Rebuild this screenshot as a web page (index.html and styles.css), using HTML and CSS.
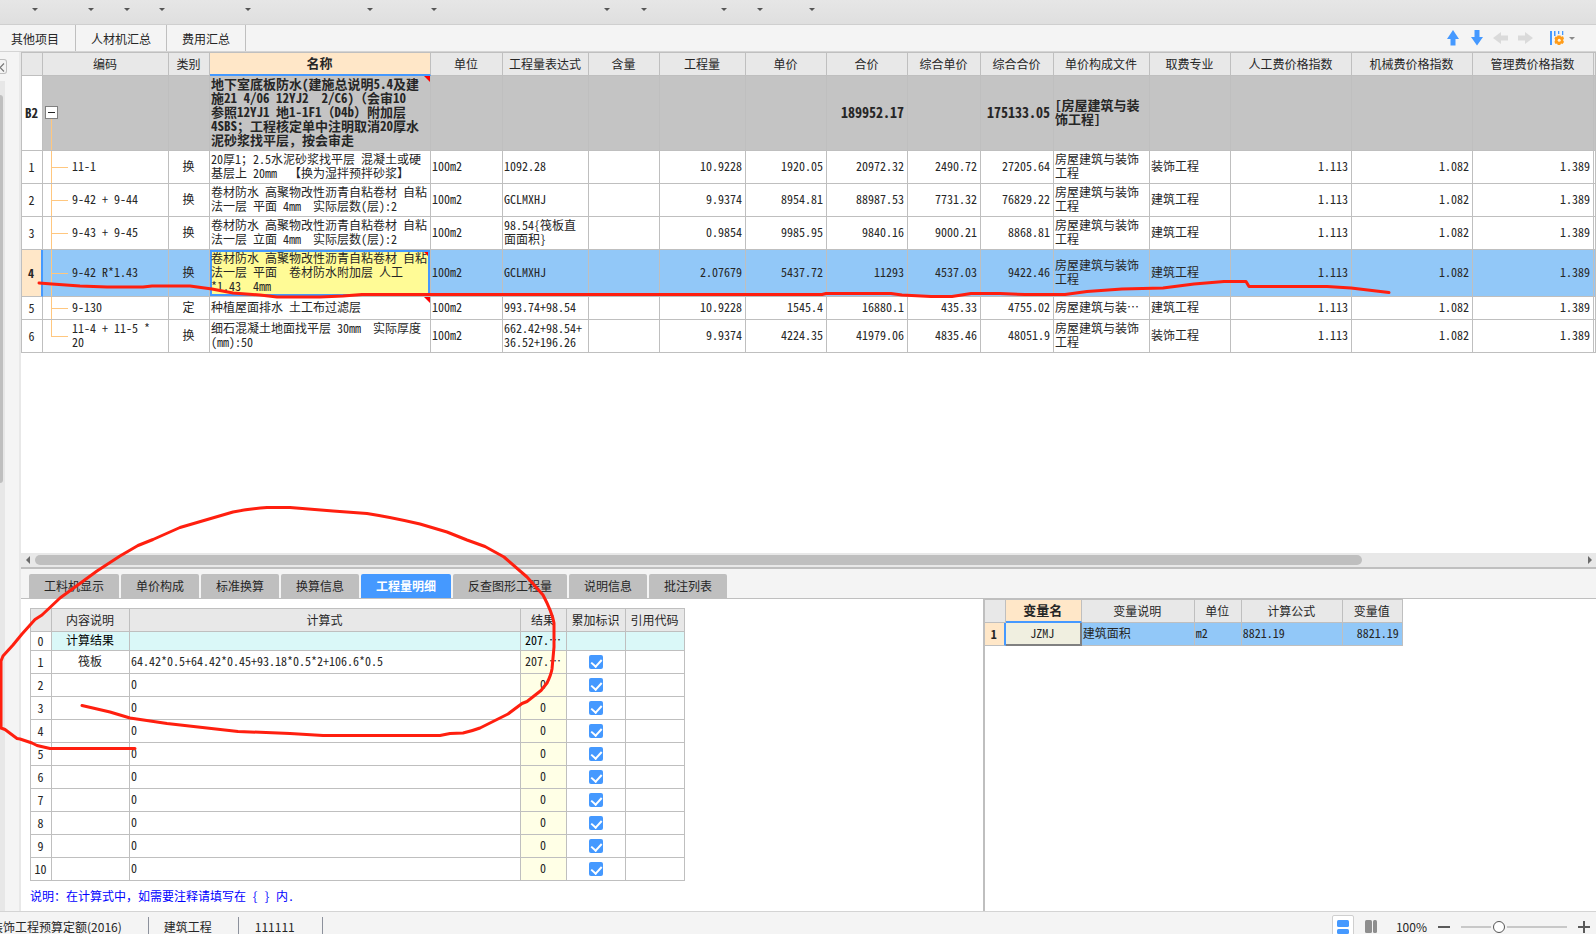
FILE: index.html
```html
<!DOCTYPE html>
<html lang="zh-CN">
<head>
<meta charset="utf-8">
<title>工程预算</title>
<link rel="stylesheet" href="styles.css">
</head>
<body>
<div class="app">
  <div class="toolbar">
    <button class="drop" aria-label="菜单 1"></button>
    <button class="drop" aria-label="菜单 2"></button>
    <button class="drop" aria-label="菜单 3"></button>
    <button class="drop" aria-label="菜单 4"></button>
    <button class="drop" aria-label="菜单 5"></button>
    <button class="drop" aria-label="菜单 6"></button>
    <button class="drop" aria-label="菜单 7"></button>
    <button class="drop" aria-label="菜单 8"></button>
    <button class="drop" aria-label="菜单 9"></button>
    <button class="drop" aria-label="菜单 10"></button>
    <button class="drop" aria-label="菜单 11"></button>
    <button class="drop" aria-label="菜单 12"></button>
  </div>

  <div class="pages">
    <button class="page first">其他项目</button>
    <button class="page">人材机汇总</button>
    <button class="page">费用汇总</button>
    <div class="tools">
      <button class="tool" aria-label="上移"><svg width="12" height="16" viewBox="0 0 12 16"><path d="M6 0 12 9H8.500V15.500H3.500V9H0z" fill="#4599ff"/></svg></button>
      <button class="tool" aria-label="下移"><svg width="12" height="16" viewBox="0 0 12 16"><path d="M6 15.500 12 7H8.500V0H3.500V7H0z" fill="#4599ff"/></svg></button>
      <button class="tool" aria-label="左移"><svg width="15" height="12" viewBox="0 0 15 12"><path d="M0 6 8 0V3.500H15V8.500H8V12z" fill="#dadada"/></svg></button>
      <button class="tool" aria-label="右移"><svg width="15" height="12" viewBox="0 0 15 12"><path d="M15 6 7 0V3.500H0V8.500H7V12z" fill="#dadada"/></svg></button>
      <button class="tool config" aria-label="列设置">
        <svg width="15" height="16" viewBox="0 0 15 16"><path d="M0 1H2V15H0zM4 1H5.500V6H4zM8 1H9.300V4H8zM12 1H13.300V5H12z" fill="#4599ff"/><path d="M7.500 5.500H10.500L11 6.700 13 6.300 14 8.500 13 10 14 12 12.500 14 11 13.500 10.200 15H7.800L7 13.500 5.500 14 4.500 12 5.200 10 4.500 8.500 5.500 6.500 7 6.800z" fill="#ff9c1a"/><circle cx="9.200" cy="10.200" r="1.500" fill="#fff4e0"/></svg>
        <span class="caret"></span>
      </button>
    </div>
  </div>

  <div class="body">
    <aside class="gutter">
      <button class="fold" aria-label="收起"><svg width="7" height="15" viewBox="0 0 7 15"><path d="M4 3.500 0 7.500 4 11.500" fill="none" stroke="#777" stroke-width="1.200"/></svg></button>
      <div class="vbar"><span class="vthumb"></span></div>
    </aside>

    <main class="work">
      <section class="grid-area">
        <table class="grid main-grid">
          <colgroup><col class="w21"><col class="w126"><col class="w41"><col class="w221"><col class="w72"><col class="w86"><col class="w71"><col class="w86"><col class="w81"><col class="w81"><col class="w73"><col class="w73"><col class="w96"><col class="w81"><col class="w121"><col class="w121"><col class="w121"><col></colgroup>
          <thead>
            <tr class="h23"><th></th><th>编码</th><th>类别</th><th class="current">名称</th><th>单位</th><th>工程量表达式</th><th>含量</th><th>工程量</th><th>单价</th><th>合价</th><th>综合单价</th><th>综合合价</th><th>单价构成文件</th><th>取费专业</th><th>人工费价格指数</th><th>机械费价格指数</th><th>管理费价格指数</th><th></th></tr>
          </thead>
          <tbody>
            <tr class="h75 group"><td class="idx">B2</td><td class="root"><button class="collapse" aria-label="折叠"></button></td><td></td><td class="note">地下室底板防水(建施总说明5.4及建
施21 4/06 12YJ2  2/C6)<span class="full">（</span>会审10
参照12YJ1 地1-1F1<span class="full">（</span>D4b<span class="full">）</span>附加层
4SBS；工程核定单中注明取消20厚水
泥砂浆找平层<span class="full">，</span>按会审走</td><td></td><td></td><td></td><td></td><td></td><td class="num">189952.17</td><td></td><td class="num">175133.05</td><td>[房屋建筑与装
饰工程]</td><td></td><td></td><td></td><td></td><td></td></tr>
            <tr class="h33"><td class="idx">1</td><td class="code">11-1</td><td class="mid">换</td><td>20厚1；2.5水泥砂浆找平层 混凝土或硬
基层上 20mm  【换为湿拌预拌砂浆】</td><td>100m2</td><td>1092.28</td><td></td><td class="num">10.9228</td><td class="num">1920.05</td><td class="num">20972.32</td><td class="num">2490.72</td><td class="num">27205.64</td><td>房屋建筑与装饰
工程</td><td>装饰工程</td><td class="num">1.113</td><td class="num">1.082</td><td class="num">1.389</td><td></td></tr>
            <tr class="h33"><td class="idx">2</td><td class="code">9-42 + 9-44</td><td class="mid">换</td><td>卷材防水 高聚物改性沥青自粘卷材 自粘
法一层 平面 4mm  实际层数(层):2</td><td>100m2</td><td>GCLMXHJ</td><td></td><td class="num">9.9374</td><td class="num">8954.81</td><td class="num">88987.53</td><td class="num">7731.32</td><td class="num">76829.22</td><td>房屋建筑与装饰
工程</td><td>建筑工程</td><td class="num">1.113</td><td class="num">1.082</td><td class="num">1.389</td><td></td></tr>
            <tr class="h33"><td class="idx">3</td><td class="code">9-43 + 9-45</td><td class="mid">换</td><td>卷材防水 高聚物改性沥青自粘卷材 自粘
法一层 立面 4mm  实际层数(层):2</td><td>100m2</td><td>98.54{筏板直
面面积}</td><td></td><td class="num">0.9854</td><td class="num">9985.95</td><td class="num">9840.16</td><td class="num">9000.21</td><td class="num">8868.81</td><td>房屋建筑与装饰
工程</td><td>建筑工程</td><td class="num">1.113</td><td class="num">1.082</td><td class="num">1.389</td><td></td></tr>
            <tr class="h47 selected"><td class="idx">4</td><td class="code">9-42 R*1.43</td><td class="mid">换</td><td class="note editing">卷材防水 高聚物改性沥青自粘卷材 自粘
法一层 平面  卷材防水附加层 人工
*1.43  4mm</td><td>100m2</td><td>GCLMXHJ</td><td></td><td class="num">2.07679</td><td class="num">5437.72</td><td class="num">11293</td><td class="num">4537.03</td><td class="num">9422.46</td><td>房屋建筑与装饰
工程</td><td>建筑工程</td><td class="num">1.113</td><td class="num">1.082</td><td class="num">1.389</td><td></td></tr>
            <tr class="h23"><td class="idx">5</td><td class="code">9-130</td><td class="mid">定</td><td class="note">种植屋面排水 土工布过滤层</td><td>100m2</td><td>993.74+98.54</td><td></td><td class="num">10.9228</td><td class="num">1545.4</td><td class="num">16880.1</td><td class="num">435.33</td><td class="num">4755.02</td><td>房屋建筑与装…</td><td>建筑工程</td><td class="num">1.113</td><td class="num">1.082</td><td class="num">1.389</td><td></td></tr>
            <tr class="h33"><td class="idx">6</td><td class="code last">11-4 + 11-5 *
20</td><td class="mid">换</td><td>细石混凝土地面找平层 30mm  实际厚度
(mm):50</td><td>100m2</td><td>662.42+98.54+
36.52+196.26</td><td></td><td class="num">9.9374</td><td class="num">4224.35</td><td class="num">41979.06</td><td class="num">4835.46</td><td class="num">48051.9</td><td>房屋建筑与装饰
工程</td><td>装饰工程</td><td class="num">1.113</td><td class="num">1.082</td><td class="num">1.389</td><td></td></tr>
          </tbody>
        </table>
      </section>

      <div class="hbar"><button class="arrow left" aria-label="向左滚动"></button><div class="htrack"><span class="hthumb" style="width: 85.7%"></span></div><button class="arrow right" aria-label="向右滚动"></button></div>

      <nav class="tabs">
        <button class="tab">工料机显示</button><button class="tab">单价构成</button><button class="tab">标准换算</button><button class="tab">换算信息</button><button class="tab active">工程量明细</button><button class="tab">反查图形工程量</button><button class="tab">说明信息</button><button class="tab">批注列表</button>
      </nav>

      <section class="panes">
        <div class="pane detail">
          <table class="grid detail-grid">
            <colgroup><col class="w21"><col class="w78"><col class="w391"><col class="w46"><col class="w59"><col class="w59"></colgroup>
            <thead><tr class="h23"><th></th><th>内容说明</th><th>计算式</th><th>结果</th><th>累加标识</th><th>引用代码</th></tr></thead>
            <tbody>
              <tr class="h19 total"><td class="idx">0</td><td class="mid">计算结果</td><td></td><td class="mid">207.…</td><td></td><td></td></tr>
              <tr class="h23"><td class="idx">1</td><td class="mid">筏板</td><td>64.42*0.5+64.42*0.45+93.18*0.5*2+106.6*0.5</td><td class="res">207.…</td><td class="mid"><input type="checkbox" aria-label="累加 1" checked></td><td></td></tr>
              <tr class="h23"><td class="idx">2</td><td></td><td>0</td><td class="res">0</td><td class="mid"><input type="checkbox" aria-label="累加 2" checked></td><td></td></tr>
              <tr class="h23"><td class="idx">3</td><td></td><td>0</td><td class="res">0</td><td class="mid"><input type="checkbox" aria-label="累加 3" checked></td><td></td></tr>
              <tr class="h23"><td class="idx">4</td><td></td><td>0</td><td class="res">0</td><td class="mid"><input type="checkbox" aria-label="累加 4" checked></td><td></td></tr>
              <tr class="h23"><td class="idx">5</td><td></td><td>0</td><td class="res">0</td><td class="mid"><input type="checkbox" aria-label="累加 5" checked></td><td></td></tr>
              <tr class="h23"><td class="idx">6</td><td></td><td>0</td><td class="res">0</td><td class="mid"><input type="checkbox" aria-label="累加 6" checked></td><td></td></tr>
              <tr class="h23"><td class="idx">7</td><td></td><td>0</td><td class="res">0</td><td class="mid"><input type="checkbox" aria-label="累加 7" checked></td><td></td></tr>
              <tr class="h23"><td class="idx">8</td><td></td><td>0</td><td class="res">0</td><td class="mid"><input type="checkbox" aria-label="累加 8" checked></td><td></td></tr>
              <tr class="h23"><td class="idx">9</td><td></td><td>0</td><td class="res">0</td><td class="mid"><input type="checkbox" aria-label="累加 9" checked></td><td></td></tr>
              <tr class="h23"><td class="idx">10</td><td></td><td>0</td><td class="res">0</td><td class="mid"><input type="checkbox" aria-label="累加 10" checked></td><td></td></tr>
            </tbody>
          </table>
          <p class="hint">说明：在计算式中<span class="full">，</span>如需要注释请填写在 { } 内.</p>
        </div>
        <div class="pane vars">
          <table class="grid vars-grid">
            <colgroup><col class="w21"><col class="w76"><col class="w113"><col class="w47"><col class="w101"><col class="w60"></colgroup>
            <thead><tr class="h23"><th></th><th class="current">变量名</th><th>变量说明</th><th>单位</th><th>计算公式</th><th>变量值</th></tr></thead>
            <tbody><tr class="h23 selected"><td class="idx">1</td><td class="mid key">JZMJ</td><td>建筑面积</td><td>m2</td><td>8821.19</td><td class="num">8821.19</td></tr></tbody>
          </table>
        </div>
      </section>
    </main>
  </div>

  <footer class="status">
    <div class="status-row">
      <span class="seg clip">装饰工程预算定额(2016)</span>
      <span class="seg">建筑工程</span>
      <span class="seg code-seg">111111</span>
      <div class="zoom">
        <button class="view on" aria-label="上下布局"><svg width="12" height="14" viewBox="0 0 12 14"><rect width="12" height="7" rx="1.500" fill="#4599ff"/><rect y="9" width="12" height="5" rx="1.500" fill="#4599ff"/></svg></button>
        <button class="view" aria-label="左右布局"><svg width="12" height="14" viewBox="0 0 12 14"><rect width="7" height="13" rx="1.500" fill="#8e8e8e"/><rect x="8" width="4" height="13" rx="1.500" fill="#8e8e8e"/></svg></button>
        <label class="percent" for="scale">100%</label>
        <button class="step" aria-label="缩小"><svg width="12" height="12" viewBox="0 0 12 12"><path d="M0 6H12" stroke="#5a5a5a" stroke-width="2"/></svg></button>
        <input id="scale" class="scale" type="range" min="0" max="100" value="34">
        <button class="step" aria-label="放大"><svg width="12" height="12" viewBox="0 0 12 12"><path d="M0 6H12M6 0V12" stroke="#5a5a5a" stroke-width="2"/></svg></button>
      </div>
    </div>
  </footer>

  <svg class="ink" width="1400" height="760" viewBox="0 0 1400 760" aria-hidden="true">
    <path d="M39 283 52 284 80 286 107 287H143L152 286H190L212 289 233 293 260 295 277 297H320L343 296 362 294.500H822L826 293.500H891L902 295 931 296.500H952L971 293.500H1000L1025 294.500H1065L1087 291.500 1122 289 1163 288 1194 284 1224 281.500H1246L1249 286.500H1327L1351 288 1372 290.500 1389 292.500"/>
    <path d="M82 705.500 110 712 130 718 167 723.500 238 731.500 290 733.500 323 735.500H440L450 733.500 463 733Q472 731 480 728L508 714 522 703.500 527 701.500 541 690.500 547 683Q551 675 552 669L554 647V623Q552 612 543 595L527 577 504 557 485 546.500 467 540 447 532 420 524Q390 517 367 513.500L333 511 290 507.500H267Q248 509 233 512L180 527.500 153 539.500 138 545.500 120 556 97 571 60 598 42 615 35 619.500 22 634 13 645 3 656 1 661V728L5 729.500 17 738.500 20 739 32 743 37 745.500 50 748.500H135"/>
  </svg>
</div>
</body>
</html>
```

FILE: styles.css
```css
* { box-sizing: border-box; }

body {
  margin: 0;
  color: #262626;
  background: #f4f4f4;
  font: 12px/14px "Noto Sans CJK SC", "Liberation Sans", sans-serif;
  text-spacing-trim: space-all;
}

button {
  margin: 0;
  padding: 0;
  border: 0;
  background: none;
  color: inherit;
  font: inherit;
}

svg { display: block; }

.app {
  position: relative;
  display: flex;
  flex-direction: column;
  height: 100vh;
  min-height: 780px;
  overflow: hidden;
}

/* Toolbar */
.toolbar {
  display: grid;
  grid-template-columns: 38px 56px 36px 35px 86px 122px 64px 173px 37px 80px 36px 52px;
  height: 25px;
  flex: none;
  border-bottom: 1px solid #cfcfcf;
  background: linear-gradient(#e6e6e6, #dfdfdf);
}

.drop::after {
  content: "";
  display: block;
  margin: -4px 0 0 auto;
  width: 0;
  border: 3px solid transparent;
  border-top-color: #555;
  border-bottom: 0;
}

/* Page tabs */
.pages {
  display: flex;
  height: 27px;
  flex: none;
  border-bottom: 1px solid #d4d4d4;
}

.page {
  padding: 2px 15px 0;
  border-right: 1px solid #bfbfbf;
}

.page.first { padding: 2px 16px 0 11px; }

.tools {
  display: flex;
  align-items: center;
  gap: 10px;
  margin-left: auto;
  padding-right: 21px;
}

.tool:nth-child(1) { margin-right: 2px; }

.config {
  display: flex;
  align-items: center;
  gap: 4px;
  margin-left: 7px;
}

.caret {
  border: 3px solid transparent;
  border-top-color: #8a8a8a;
  border-bottom: 0;
}

/* Body */
.body {
  display: flex;
  flex: 1;
  min-height: 0;
}

.gutter {
  display: flex;
  flex-direction: column;
  align-items: flex-start;
  width: 21px;
  flex: none;
  border-right: 2px solid #e8e8e8;
}

.fold {
  width: 7px;
  height: 15px;
  margin: 7px 0;
  border: 1px solid #bfbfbf;
  border-left: 0;
  border-radius: 0 3px 3px 0;
}

.vbar {
  width: 5px;
  flex: 1;
  padding-top: 14px;
  background: #e7e7e7;
}

.vthumb {
  display: block;
  width: 3px;
  height: 388px;
  border-radius: 0 3px 3px 0;
  background: #bfbfbf;
}

.work {
  display: flex;
  flex: 1;
  flex-direction: column;
  min-width: 0;
}

.grid-area {
  flex: 1;
  min-height: 0;
  overflow: hidden;
  background: #fff;
}

/* Tables: Latin text and digits take half the width of a Han character */
.grid {
  table-layout: fixed;
  border-collapse: separate;
  border-spacing: 0;
  border-top: 1px solid #bfbfbf;
  border-left: 1px solid #bfbfbf;
  font-feature-settings: "hwid" 1;
}

.full { font-feature-settings: normal; }

.main-grid { width: 100%; min-width: 1575px; }
.detail-grid { width: 655px; }
.vars-grid { width: 418px; border-left: 0; }

.grid th,
.grid td {
  padding: 0 3px 2px 1px;
  border-right: 1px solid #bfbfbf;
  border-bottom: 1px solid #bfbfbf;
  background: #fff;
  text-align: left;
  vertical-align: middle;
  white-space: pre;
  overflow: hidden;
}

.grid th {
  padding: 0 1px 0 0;
  background: #e8e8e8;
  font-weight: 400;
  text-align: center;
}

.grid th.current {
  padding-bottom: 1px;
  border-bottom: 2px solid #4599ff;
  background: #ffe7c8;
  font-size: 13px;
  font-weight: 700;
}

.grid .num { text-align: right; }
.grid .mid, .grid .res { padding: 0 1px 2px 0; text-align: center; }
.grid .idx { padding: 0 1px 0 0; text-align: center; }
.grid .res { background: #ffffe6; }
.grid .total td:not(.idx) { background: #daf8f8; color: #000; }

.group td {
  background: #c4c4c4;
  font-size: 13px;
  font-weight: 700;
}

.grid .group td { background: #c4c4c4; }
.group .num { font-size: 14px; }
.grid .group .idx { background: #fff; }
.grid .selected td { background: #92c8f8; }

.grid .selected .idx {
  border-right: 2px solid #4599ff;
  background: #ffe7c8;
  font-weight: 700;
}

.grid .selected .editing {
  background: #fffb96;
  box-shadow: inset 0 0 0 2px #4599ff;
}

.grid .selected .key {
  border-right: 2px solid #808080;
  border-bottom: 2px solid #808080;
  background: #f0efe0;
}

/* Comment marker in the corner of a cell */
.note { position: relative; }

.note::after {
  content: "";
  position: absolute;
  top: 0;
  right: 0;
  border-top: 6px solid #f00;
  border-left: 6px solid transparent;
}

.editing::after {
  top: 2px;
  right: 2px;
  border-top-width: 4px;
  border-left-width: 4px;
}

/* Tree lines */
.root { position: relative; }

.grid .root { padding-left: 2px; }

.collapse {
  display: block;
  width: 13px;
  height: 13px;
  border: 1px solid #808080;
  background: linear-gradient(#262626, #262626) center / 7px 1px no-repeat #fff;
}

.root::after {
  content: "";
  position: absolute;
  top: 43px;
  bottom: 0;
  left: 8px;
  border-left: 1px solid #ffc77f;
}

.grid .code {
  position: relative;
  padding-left: 29px;
}

.code::before {
  content: "";
  position: absolute;
  top: 0;
  bottom: -1px;
  left: 8px;
  border-left: 1px solid #ffc77f;
}

.code.last::before { bottom: 50%; }

.code::after {
  content: "";
  position: absolute;
  top: 50%;
  left: 8px;
  width: 17px;
  border-top: 1px solid #ffc77f;
}

.h19 { height: 19px; }
.h23 { height: 23px; }
.h33 { height: 33px; }
.h47 { height: 47px; }
.h75 { height: 75px; }

.w21 { width: 21px; }
.w41 { width: 41px; }
.w46 { width: 46px; }
.w47 { width: 47px; }
.w59 { width: 59px; }
.w60 { width: 60px; }
.w71 { width: 71px; }
.w72 { width: 72px; }
.w73 { width: 73px; }
.w76 { width: 76px; }
.w78 { width: 78px; }
.w81 { width: 81px; }
.w86 { width: 86px; }
.w96 { width: 96px; }
.w101 { width: 101px; }
.w113 { width: 113px; }
.w121 { width: 121px; }
.w126 { width: 126px; }
.w221 { width: 221px; }
.w391 { width: 391px; }

/* Horizontal scrollbar */
.hbar {
  display: flex;
  align-items: center;
  height: 16px;
  flex: none;
  padding: 0 4px 0 5px;
  border-bottom: 2px solid #bfbfbf;
  background: #e8e8e8;
}

.arrow { border: 4px solid transparent; }
.arrow.left { border-right: 4px solid #6a6a6a; border-left: 0; }
.arrow.right { border-left: 4px solid #6a6a6a; border-right: 0; }

.htrack { flex: 1; padding: 0 5px; }

.hthumb {
  display: block;
  height: 10px;
  border-radius: 5px;
  background: #bfbfbf;
}

/* Detail tabs */
.tabs {
  display: flex;
  align-items: flex-end;
  gap: 2px;
  height: 30px;
  flex: none;
  padding-left: 8px;
  border-bottom: 1px solid #bfbfbf;
}

.tab {
  height: 24px;
  padding: 0 15px;
  border-radius: 2px 2px 0 0;
  background: #bfbfbf;
}

.tab.active {
  background: #4599ff;
  color: #fff;
  font-weight: 700;
}

/* Lower panes */
.panes {
  display: flex;
  flex: none;
  min-height: 312px;
  background: #fff;
}

.pane { min-width: 0; }

.detail {
  flex: 954 0 0;
  padding: 9px 0 0 9px;
}

.vars {
  flex: 612 0 0;
  border-left: 2px solid #bfbfbf;
}

.hint {
  margin: 8px 0 0;
  color: #00f;
  font-feature-settings: "hwid" 1;
}

input[type="checkbox"] {
  appearance: none;
  display: block;
  width: 14px;
  height: 14px;
  margin: 2px auto 0;
  padding: 2px 0 0 4px;
  border-radius: 2px;
  background: #4599ff;
}

input[type="checkbox"]:checked::after {
  content: "";
  display: block;
  width: 5px;
  height: 8px;
  border: solid #fff;
  border-width: 0 2px 2px 0;
  transform: rotate(42deg);
}

/* Status bar */
.status {
  height: 23px;
  flex: none;
  overflow: hidden;
  border-top: 1px solid #d4d4d4;
}

.status-row {
  display: flex;
  align-items: center;
  height: 30px;
}

.seg {
  padding: 3px 26px 3px 15px;
  border-right: 1px solid #8c919c;
}

.seg.clip { margin-left: -24px; }
.seg.code-seg { padding: 3px 27px 3px 16px; }

.zoom {
  display: flex;
  align-items: center;
  margin-left: auto;
  padding-right: 6px;
}

.view { padding: 4px; border: 1px solid transparent; }

.view.on {
  margin-right: 6px;
  border-color: #cfcfcf;
  border-radius: 2px;
  background: #fff;
}

.percent { margin: 0 11px 0 14px; }

.scale {
  appearance: none;
  width: 106px;
  height: 16px;
  margin: 0 11px;
  background: linear-gradient(#c8c8c8, #c8c8c8) center / 100% 2px no-repeat;
}

.scale::-webkit-slider-thumb {
  appearance: none;
  width: 12px;
  height: 12px;
  border: 1px solid #555;
  border-radius: 50%;
  background: #fff;
  box-shadow: 0 0 0 2px #f4f4f4;
}

/* Freehand marks drawn over the window */
.ink {
  position: absolute;
  top: 0;
  left: 0;
  pointer-events: none;
}

.ink path {
  fill: none;
  stroke: #ff1f0f;
  stroke-width: 3px;
  stroke-linecap: round;
  stroke-linejoin: round;
}
```
